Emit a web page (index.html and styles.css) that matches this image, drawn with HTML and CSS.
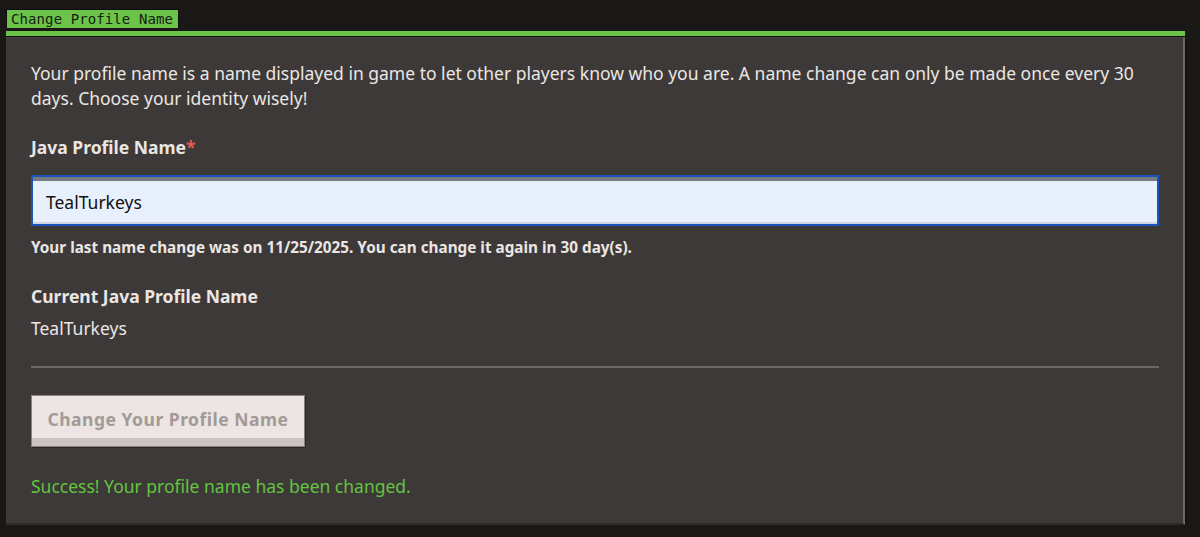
FILE: index.html
```html
<!DOCTYPE html>
<html>
<head>
<meta charset="utf-8">
<link rel="stylesheet" href="styles.css">
</head>
<body>
<div class="wrap">
  <div class="tab">Change Profile Name</div>
  <div class="bar"></div>
  <div class="panel">
    <p class="intro">Your profile name is a name displayed in game to let other players know who you are. A name change can only be made once every 30 days. Choose your identity wisely!</p>
    <div class="label">Java Profile Name<span class="req">*</span></div>
    <div class="input">TealTurkeys</div>
    <div class="help">Your last name change was on 11/25/2025. You can change it again in 30 day(s).</div>
    <div class="label current">Current Java Profile Name</div>
    <div class="value">TealTurkeys</div>
    <div class="rule"></div>
    <div class="btn">Change Your Profile Name</div>
    <div class="success">Success! Your profile name has been changed.</div>
  </div>
</div>
</body>
</html>
```
FILE: styles.css
```css
html, body {
  margin: 0;
  padding: 0;
  background: #191817;
}
body {
  font-family: "Noto Sans", "Open Sans", sans-serif;
  color: #ebe6e3;
}
.wrap {
  padding: 9px 15px 0 6px;
}
.tab {
  display: inline-block;
  background: #6cc349;
  color: #142010;
  font-family: "DejaVu Sans Mono", monospace;
  font-size: 14px;
  line-height: 18px;
  height: 18px;
  padding: 0 5px 0 4px;
  border: 1px solid #0d0d0c;
  border-bottom: none;
  letter-spacing: 0.1px;
  vertical-align: top;
}
.bar {
  height: 5px;
  background: #6cc349;
  border-bottom: 1px solid #0d0d0c;
}
.panel {
  background: #3d3938;
  border-top: 1px solid #4a4645;
  border-right: 2px solid #6c6867;
  border-bottom: 2px solid #2e2b2a;
  box-shadow: 2px 2px 0 #141312;
  padding: 23px 24px 25px 25px;
}
.intro {
  margin: 0;
  font-size: 17.5px;
  line-height: 25px;
}
.label {
  margin-top: 24px;
  font-size: 17.5px;
  font-weight: 700;
  line-height: 24px;
}
.req {
  color: #e35a5a;
}
.input {
  margin-top: 16px;
  height: 43px;
  background: #e8f0fd;
  border: 2px solid #1a55bd;
  border-top: 6px solid #1a55bd;
  box-shadow: inset 0 -2px 0 #d2d6de;
  position: relative;
  color: #111;
  font-size: 17.5px;
  line-height: 42px;
  padding-left: 13px;
}
.input::before {
  content: "";
  position: absolute;
  left: 0;
  right: 0;
  top: -4px;
  height: 4px;
  background: #777b81;
}
.help {
  margin-top: 9px;
  font-size: 15.3px;
  font-weight: 700;
  line-height: 24px;
}
.label.current {
  margin-top: 25px;
}
.value {
  margin-top: 8px;
  font-size: 17.5px;
  line-height: 24px;
}
.rule {
  margin-top: 26px;
  height: 2px;
  background: #6b6766;
}
.btn {
  margin-top: 27px;
  width: 274px;
  height: 52px;
  box-sizing: border-box;
  background: #ece5e3;
  border: 1px solid #8b8381;
  box-shadow: inset 0 -8px 0 #cdc4c1, 1px 1px 0 #2a2726;
  color: #a39a98;
  font-weight: 700;
  font-size: 17.5px;
  letter-spacing: 0.5px;
  line-height: 46px;
  text-align: center;
  padding-bottom: 4px;
}
.success {
  margin-top: 27px;
  color: #63c43f;
  font-size: 17.5px;
  line-height: 24px;
}
```
